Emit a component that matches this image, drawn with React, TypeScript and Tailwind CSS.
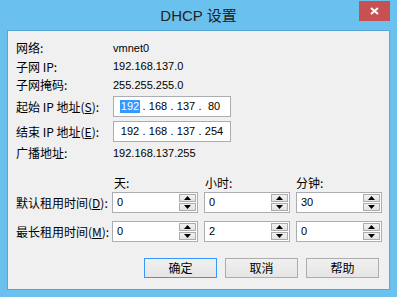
import React from "react";

const cjk = { fontFamily: '"Noto Sans CJK SC", "Noto Sans", sans-serif' };
const lat = { fontFamily: '"Liberation Sans", Arial, "Noto Sans CJK SC", sans-serif' };

function Label({ children, className = "" }: { children: React.ReactNode; className?: string }) {
  return (
    <div className={`text-[12px] leading-none text-black ${className}`} style={cjk}>
      {children}
    </div>
  );
}

function Value({ children }: { children: React.ReactNode }) {
  return (
    <div className="text-[11px] leading-none text-black" style={lat}>
      {children}
    </div>
  );
}

function IpBox({ parts, selectFirst }: { parts: string[]; selectFirst?: boolean }) {
  return (
    <div className="flex h-[21px] w-[118px] items-center border border-[#abadb3] bg-white pl-[5px] text-[11px] text-black" style={lat}>
      {parts.map((p, i) => (
        <React.Fragment key={i}>
          <div className="flex w-[22px] justify-center">
            {i === 0 && selectFirst ? (
              <span className="flex h-[13px] items-center bg-[#3399ff] px-[1px] text-white">{p}</span>
            ) : (
              <span>{p}</span>
            )}
          </div>
          {i < parts.length - 1 && <div className="flex w-[6px] justify-center">.</div>}
        </React.Fragment>
      ))}
    </div>
  );
}

function Tri({ up }: { up?: boolean }) {
  return (
    <svg width="7" height="4" viewBox="0 0 7 4">
      {up ? <polygon points="0,4 7,4 3.5,0" fill="#000" /> : <polygon points="0,0 7,0 3.5,4" fill="#000" />}
    </svg>
  );
}

function Spin({ value }: { value: string }) {
  return (
    <div className="flex h-[21px] w-[86px] border border-[#abadb3] bg-white">
      <div className="flex-1 pl-[4px] pt-[4px] text-[11px] leading-none text-black" style={lat}>
        {value}
      </div>
      <div className="mr-[1px] flex w-[17px] flex-col gap-[1px] py-[1px]">
        <div className="flex h-[9px] items-center justify-center border border-[#acacac] bg-gradient-to-b from-[#f2f2f2] to-[#e3e3e3]">
          <Tri up />
        </div>
        <div className="flex h-[8px] items-center justify-center border border-[#acacac] bg-gradient-to-b from-[#f2f2f2] to-[#e3e3e3]">
          <Tri />
        </div>
      </div>
    </div>
  );
}

function Btn({ children, primary }: { children: React.ReactNode; primary?: boolean }) {
  return (
    <div
      className={`flex h-[20px] w-[73px] items-center justify-center border bg-gradient-to-b from-[#f0f0f0] to-[#e5e5e5] text-[12px] leading-none text-black ${
        primary ? "border-[#3399ff]" : "border-[#adadad]"
      }`}
      style={cjk}
    >
      {children}
    </div>
  );
}

export default function App() {
  return (
    <div className="flex h-[297px] w-[397px] flex-col bg-[#6bc1ee]">
      <div className="relative flex h-[30px] items-center justify-center">
        <span className="text-[15px] leading-none text-[#222]" style={{ fontFamily: '"Liberation Sans", "Noto Sans CJK SC", sans-serif' }}>
          DHCP 设置
        </span>
        <div className="absolute right-[7px] top-[1px] flex h-[20px] w-[31px] items-center justify-center bg-[#c75050]">
          <svg width="9" height="8" viewBox="0 0 9 8">
            <path d="M1 1 L8 7 M8 1 L1 7" stroke="#fff" strokeWidth="2" />
          </svg>
        </div>
      </div>
      <div className="mx-[7px] h-[260px] border border-[#58a6d6] bg-[#f0f0f0]">
        <div className="flex flex-col pl-[8px] pt-[8px]">
          <div className="flex h-[18px] items-center">
            <Label className="w-[97px]">网络:</Label>
            <Value>vmnet0</Value>
          </div>
          <div className="flex h-[19px] items-center">
            <Label className="w-[97px]">子网 IP:</Label>
            <Value>192.168.137.0</Value>
          </div>
          <div className="flex h-[18px] items-center">
            <Label className="w-[97px]">子网掩码:</Label>
            <Value>255.255.255.0</Value>
          </div>
          <div className="mt-[2px] flex h-[21px] items-center">
            <Label className="w-[97px]">
              起始 IP 地址(<span className="underline">S</span>):
            </Label>
            <IpBox parts={["192", "168", "137", "80"]} selectFirst />
          </div>
          <div className="mt-[4px] flex h-[21px] items-center">
            <Label className="w-[97px]">
              结束 IP 地址(<span className="underline">E</span>):
            </Label>
            <IpBox parts={["192", "168", "137", "254"]} />
          </div>
          <div className="mt-[2px] flex h-[18px] items-center">
            <Label className="w-[97px]">广播地址:</Label>
            <Value>192.168.137.255</Value>
          </div>

          <div className="mt-[12px] flex h-[18px] items-center">
            <div className="w-[97px]" />
            <Label className="w-[92px] pl-[1px]">天:</Label>
            <Label className="w-[91px]">小时:</Label>
            <Label>分钟:</Label>
          </div>
          <div className="flex h-[21px] items-center">
            <Label className="w-[96px]">
              默认租用时间(<span className="underline">D</span>):
            </Label>
            <div className="flex gap-[6px]">
              <Spin value="0" />
              <Spin value="0" />
              <Spin value="30" />
            </div>
          </div>
          <div className="mt-[8px] flex h-[21px] items-center">
            <Label className="w-[96px]">
              最长租用时间(<span className="underline">M</span>):
            </Label>
            <div className="flex gap-[6px]">
              <Spin value="0" />
              <Spin value="2" />
              <Spin value="0" />
            </div>
          </div>
          <div className="mt-[16px] flex justify-end gap-[8px] pr-[10px]">
            <Btn primary>确定</Btn>
            <Btn>取消</Btn>
            <Btn>帮助</Btn>
          </div>
        </div>
      </div>
    </div>
  );
}
